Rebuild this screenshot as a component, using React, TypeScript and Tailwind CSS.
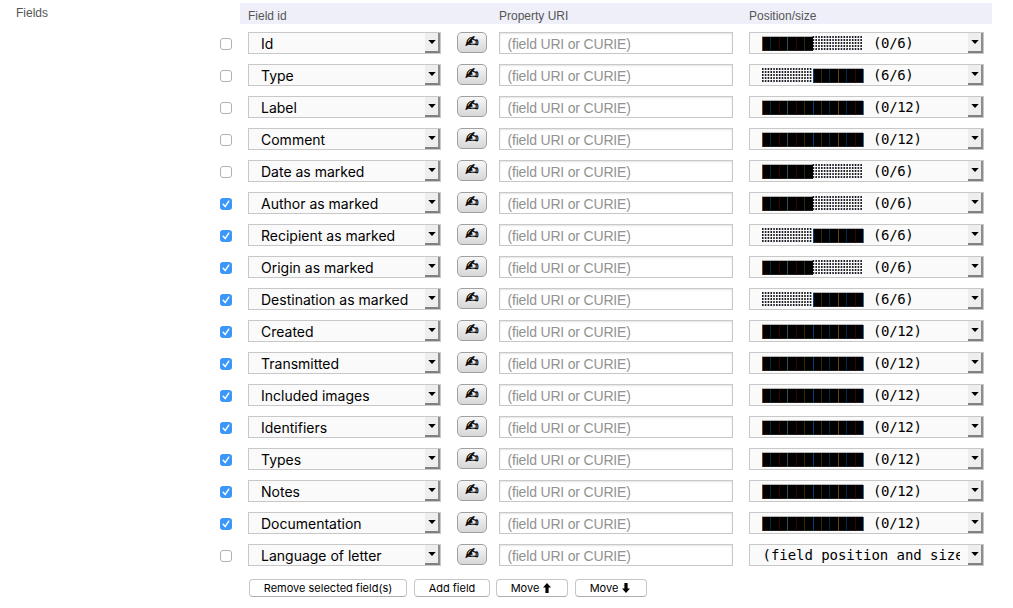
import React from "react";

type Span = "left" | "right" | "full" | "none";

const rows: [string, boolean, Span][] = [
  ["Id", false, "left"],
  ["Type", false, "right"],
  ["Label", false, "full"],
  ["Comment", false, "full"],
  ["Date as marked", false, "left"],
  ["Author as marked", true, "left"],
  ["Recipient as marked", true, "right"],
  ["Origin as marked", true, "left"],
  ["Destination as marked", true, "right"],
  ["Created", true, "full"],
  ["Transmitted", true, "full"],
  ["Included images", true, "full"],
  ["Identifiers", true, "full"],
  ["Types", true, "full"],
  ["Notes", true, "full"],
  ["Documentation", true, "full"],
  ["Language of letter", false, "none"],
];

const captions = { left: "(0/6)", right: "(6/6)", full: "(0/12)", none: "(field position and size" };
const seams = ["#7a3f10", "#06283a", "#350505", "#3d4d48", "#350505", "#332a05", "#063a78", "#332a05", "#06283a", "#6a4208", "#06283a", "#350505"];

function Blocks({ span }: { span: Span }) {
  const cell = 8.43;
  return (
    <svg width="102" height="16" className="block shrink-0">
      {seams.map((color, i) => {
        const filled = span === "full" || (span === "left" ? i < 6 : i >= 6);
        const x = Math.round(i * cell);
        if (filled) {
          const w = Math.round((i + 1) * cell) - x;
          return (
            <g key={i}>
              <rect x={x} y="0" width={w} height="1" fill="#b5b5b5" />
              <rect x={x} y="1" width={w} height="14" fill="#000" />
              <rect x={x} y="1" width="1" height="14" fill={color} />
              <rect x={x + 1} y="14" width={w - 1} height="1" fill="#222" />
            </g>
          );
        }
        return (
          <g key={i}>
            {[0, 1, 2].flatMap((c) =>
              [0, 1, 2, 3, 4].map((r) => (
                <rect key={`${c}-${r}`} x={i * cell + c * 2.81} y={r * 3 + 0.1} width="1.6" height="1.8" fill={c === 1 ? "#0a0f28" : "#080808"} />
              )),
            )}
          </g>
        );
      })}
      {span !== "left" && <rect x="101" y="1" width="1" height="14" fill="#2970aa" />}
    </svg>
  );
}

function Arrow() {
  return (
    <span className="flex h-5 w-[15px] shrink-0 items-center justify-center border-r-2 border-b-2 border-r-[#8d8d8d] border-b-[#808080] bg-[#eeeeee] pl-px">
      <svg width="8" height="4" className="block"><path d="M0.3 0H7.7L4 4Z" fill="#000" /></svg>
    </span>
  );
}

function Check({ on }: { on: boolean }) {
  return on ? (
    <span className="flex size-3 items-center justify-center rounded-[3px] bg-[#3b97f8]">
      <svg width="10" height="10" viewBox="0 0 10 10" fill="none" stroke="#fff" strokeWidth="1.5" strokeLinecap="round" strokeLinejoin="round">
        <path d="M2.2 5.3 4.2 7.6 7.8 2.2" />
      </svg>
    </span>
  ) : (
    <span className="block size-3 rounded-[3px] border border-[#b2b2b2] bg-white" />
  );
}

function WritingHand() {
  return <span className="font-['DejaVu_Sans',sans-serif] text-[16px] leading-none text-black [-webkit-text-stroke:0.45px_#000]">✍</span>;
}

function HeavyArrow({ down }: { down?: boolean }) {
  return (
    <svg width="8" height="10" viewBox="0 0 8 10" className={down ? "rotate-180" : ""}>
      <path d="M4 0 8 4.6H5.6V10H2.4V4.6H0Z" fill="#000" />
    </svg>
  );
}

const action = "flex h-[18px] items-center justify-center rounded-[4px] border border-[#c6c6c6] border-b-[#adadad] bg-white text-[11px] leading-none text-black whitespace-nowrap";

export default function App() {
  return (
    <div className="flex h-[608px] w-[1013px] overflow-hidden bg-white font-['Inter',sans-serif]">
      <div className="w-[220px] shrink-0 pt-[5px] pl-4 font-['Liberation_Sans',sans-serif] text-[12px] leading-4 text-[#555]">Fields</div>
      <div className="flex w-[772px] flex-col pt-[3px]">
        <div className="ml-5 flex h-[21px] items-center bg-[#efeff9] pt-1 pl-2 font-['Liberation_Sans',sans-serif] text-[12px] leading-4 text-[#555]">
          <span className="w-[251px]">Field id</span>
          <span className="w-[250px]">Property URI</span>
          <span>Position/size</span>
        </div>
        <div className="flex flex-col gap-[10px] pt-2">
          {rows.map(([name, on, span]) => (
            <div key={name} className="flex h-[22px]">
              <div className="w-7 shrink-0 pt-1.5"><Check on={on} /></div>
              <div className="flex w-[193px] shrink-0 justify-between border border-[#c8c8c8] bg-[#fafafa]">
                <span className="pt-px pl-3 text-[14px] leading-5 text-black">{name}</span>
                <Arrow />
              </div>
              <button className="ml-4 flex h-[21px] w-[30px] shrink-0 items-center justify-center rounded-[5px] border border-[#a0a0a0] bg-linear-to-b from-[#f7f7f7] to-[#d7d7d7] pb-[2px]">
                <WritingHand />
              </button>
              <div className="ml-3 w-[234px] shrink-0 border border-[#c8c8c8] bg-white pt-px pl-[7.5px] font-['Liberation_Sans',sans-serif] text-[14px] leading-5 tracking-[-0.18px] text-[#929292] shadow-[inset_0_1px_2px_#e4e4e4]">
                (field URI or CURIE)
              </div>
              <div className="ml-4 flex w-[235px] shrink-0 justify-between border border-[#c8c8c8] bg-[#fafafa]">
                <div className={`flex w-[210px] overflow-hidden ${span === "none" ? "pl-[12.5px]" : "pl-3"}`}>
                  {span !== "none" && <div className="mr-[9px] pt-[3px]"><Blocks span={span} /></div>}
                  <span className={`font-['DejaVu_Sans_Mono',monospace] text-[14px] leading-5 whitespace-nowrap text-black ${span === "none" ? "tracking-[-0.05px]" : "tracking-[-0.35px]"}`}>{captions[span]}</span>
                </div>
                <Arrow />
              </div>
            </div>
          ))}
        </div>
        <div className="mt-[13px] ml-[29px] flex">
          <button className={`${action} w-[158px]`}>Remove selected field(s)</button>
          <button className={`${action} ml-[7px] w-[76px]`}>Add field</button>
          <button className={`${action} ml-1.5 w-[72px] gap-1 pr-[2px]`}>Move <HeavyArrow /></button>
          <button className={`${action} ml-[7px] w-[72px] gap-1 pr-[2px]`}>Move <HeavyArrow down /></button>
        </div>
      </div>
    </div>
  );
}
